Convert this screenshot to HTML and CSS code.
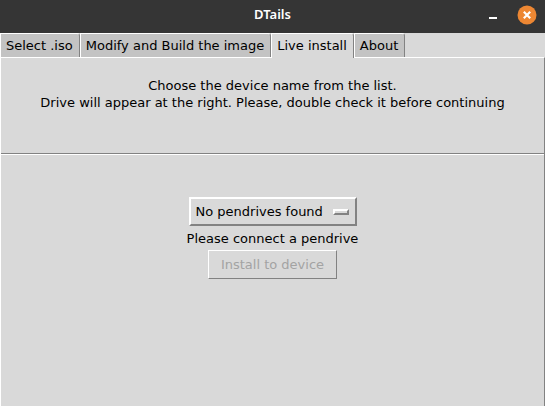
FILE: index.html
```
<!DOCTYPE html>
<html lang="en">
<head>
    <meta charset="UTF-8">
    <meta name="viewport" content="width=device-width, initial-scale=1.0">
    <title>DTails</title>
    <link rel="stylesheet" href="styles.css">
</head>
<body>

    <!-- Window title bar -->
    <header class="titlebar">
        <h1 class="title">DTails</h1>
        <div class="window-buttons">
            <button type="button" class="window-button" aria-label="Minimize">
                <svg width="20" height="20" viewBox="0 0 20 20">
                    <rect x="6" y="12" width="8" height="2" fill="#ffffff"/>
                </svg>
            </button>
            <button type="button" class="window-button" aria-label="Close">
                <svg width="20" height="20" viewBox="0 0 20 20">
                    <circle cx="10" cy="10" r="9.5" fill="#ed8733"/>
                    <path d="M6.8 6.8l6.4 6.4M13.2 6.8l-6.4 6.4" stroke="#ffffff" stroke-width="2.2"/>
                </svg>
            </button>
        </div>
    </header>

    <!-- Tabs -->
    <nav class="tabs" role="tablist">
        <button type="button" class="tab" role="tab">Select .iso</button>
        <button type="button" class="tab" role="tab">Modify and Build the image</button>
        <button type="button" class="tab active" role="tab" aria-selected="true">Live install</button>
        <button type="button" class="tab" role="tab">About</button>
    </nav>

    <!-- Live install panel -->
    <main class="panel">
        <p class="instructions">
            Choose the device name from the list.<br>
            Drive will appear at the right. Please, double check it before continuing
        </p>
        <hr class="separator">
        <form class="device-form">
            <div class="device-menu">
                <select id="device" class="device-select">
                    <option>No pendrives found</option>
                </select>
                <span class="indicator"></span>
            </div>
            <label for="device" class="message">Please connect a pendrive</label>
            <button type="submit" class="install-button" disabled>Install to device</button>
        </form>
    </main>

</body>
</html>
```

FILE: styles.css
```
/* General Styling */
* {
    box-sizing: border-box;
}

body {
    display: flex;
    flex-direction: column;
    min-height: 100vh;
    margin: 0;
    background-color: #d9d9d9;
    color: #000000;
    font-family: "DejaVu Sans", sans-serif;
    font-size: 13px;
    line-height: 17px;
}

button,
select {
    margin: 0;
    color: inherit;
    font: inherit;
}

/* Title Bar */
.titlebar {
    display: grid;
    grid-template-columns: 1fr auto 1fr;
    align-items: center;
    height: 33px;
    padding: 0 8px 4px;
    background-color: #353535;
    color: #ffffff;
}

.title {
    grid-column: 2;
    margin: 0;
    font-family: "Noto Sans", "Open Sans", sans-serif;
    font-size: 13px;
    font-weight: 600;
}

.window-buttons {
    display: flex;
    justify-content: flex-end;
    gap: 14px;
}

.window-button {
    width: 20px;
    height: 20px;
    padding: 0;
    border: none;
    background: none;
}

.window-button svg {
    display: block;
}

/* Tabs */
.tabs {
    display: flex;
    height: 24px;
}

.tab {
    padding: 2px 6px 2px 5px;
    border: 1px solid #ffffff;
    border-right-color: #828282;
    border-bottom: none;
    border-radius: 0 3px 0 0;
    background-color: #c3c3c3;
    white-space: nowrap;
}

.tab.active {
    position: relative;
    margin-bottom: -1px;
    padding-bottom: 3px;
    background-color: #d9d9d9;
}

/* Panel */
.panel {
    flex: 1;
    border: 1px solid #ffffff;
    border-right-color: #828282;
    border-bottom: none;
}

.instructions {
    min-height: 76px;
    margin: 19px 0 0;
    text-align: center;
}

.separator {
    height: 2px;
    margin: 0;
    border: none;
    border-top: 1px solid #828282;
    border-bottom: 1px solid #ffffff;
}

/* Device Form */
.device-form {
    display: flex;
    flex-direction: column;
    align-items: center;
    padding-top: 42px;
}

.device-menu {
    display: grid;
    align-items: center;
    border: 2px solid;
    border-color: #ffffff #828282 #828282 #ffffff;
}

.device-select {
    grid-area: 1 / 1;
    height: 25px;
    padding: 0 31px 0 5px;
    border: none;
    border-radius: 0;
    outline: none;
    background: none;
    appearance: none;
}

.indicator {
    grid-area: 1 / 1;
    justify-self: end;
    width: 16px;
    height: 6px;
    margin-right: 6px;
    border: 2px solid;
    border-color: #ffffff #828282 #828282 #ffffff;
    pointer-events: none;
}

.message {
    padding: 4px 0 3px;
}

.install-button {
    padding: 5px 12px;
    border: 1px solid;
    border-color: #ffffff #828282 #828282 #ffffff;
    background: none;
}

.install-button:disabled {
    color: #a3a3a3;
}
```
